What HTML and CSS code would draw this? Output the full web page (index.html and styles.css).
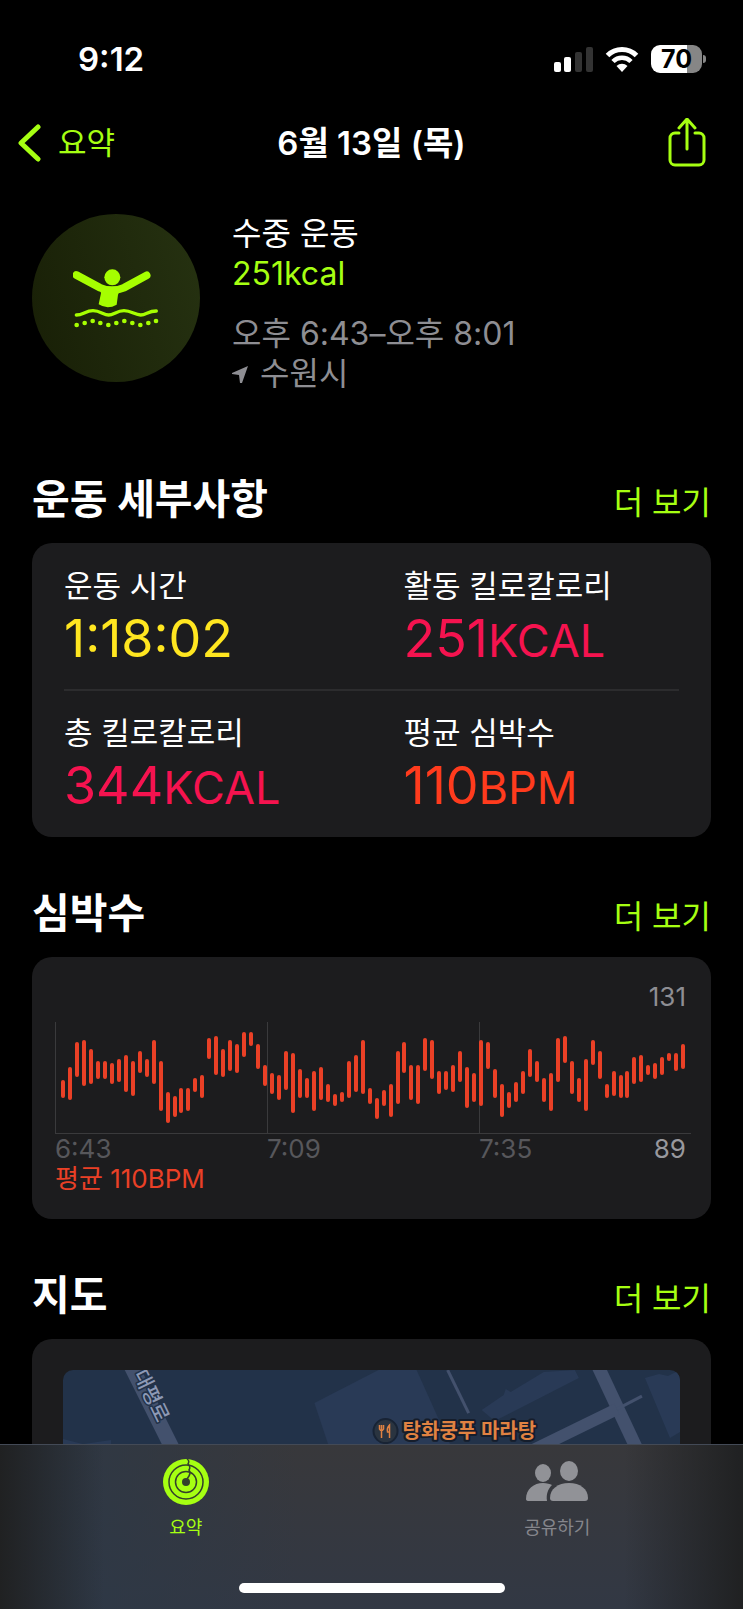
FILE: index.html
```html
<!DOCTYPE html>
<html lang="ko">
<head>
  <meta charset="UTF-8">
  <meta name="viewport" content="width=device-width, initial-scale=1.0">
  <title>수중 운동</title>
  <link rel="stylesheet" href="styles.css">
</head>
<body>

<div class="status-bar">
  <span class="time">9:12</span>
  <div class="status-icons">
    <svg width="39" height="26" viewBox="0 0 39 26">
      <rect x="0" y="16" width="7" height="10" rx="2" fill="#fff"/>
      <rect x="10" y="11" width="7" height="15" rx="2" fill="#fff"/>
      <rect x="21" y="6" width="7" height="20" rx="2" fill="#333"/>
      <rect x="32" y="1" width="7" height="25" rx="2" fill="#333"/>
    </svg>
    <svg width="34" height="26" viewBox="0 0 34 26">
      <path d="M2.5 9.5a20.5 20.5 0 0 1 29 0" fill="none" stroke="#fff" stroke-width="5"/>
      <path d="M8 15.5a12.700 12.700 0 0 1 18 0" fill="none" stroke="#fff" stroke-width="4.600"/>
      <path d="M17 26l-5.500-6a8 8 0 0 1 11 0z" fill="#fff"/>
    </svg>
    <div class="battery"><span>70</span></div>
  </div>
</div>

<nav class="nav-bar">
  <a class="back" href="#summary">
    <svg width="24" height="38" viewBox="0 0 24 38"><path d="M20 3L3 19l17 16" fill="none" stroke="#a6ff12" stroke-width="5" stroke-linecap="round" stroke-linejoin="round"/></svg>
    요약
  </a>
  <h1>6월 13일 (목)</h1>
  <button class="share" aria-label="공유">
    <svg width="38" height="50" viewBox="0 0 38 50" fill="none" stroke="#a6ff12" stroke-width="3" stroke-linecap="round" stroke-linejoin="round">
      <path d="M11 15H7a5 5 0 0 0-5 5v22a5 5 0 0 0 5 5h24a5 5 0 0 0 5-5V20a5 5 0 0 0-5-5h-4"/>
      <path d="M19 31V2M11 10l8-9 8 9"/>
    </svg>
  </button>
</nav>

<main>
  <div class="hero">
    <div class="badge">
      <svg width="87" height="60" viewBox="219 232 261 180" fill="#a6ff00">
        <circle cx="337" cy="260" r="24"/>
        <path d="M229 253L300 291Q336 306 372 291L440 254" fill="none" stroke="#a6ff00" stroke-width="23" stroke-linecap="round"/>
        <path d="M298 285Q336 300 366 285L354 312 350 342Q322 358 296 341L303 308z"/>
        <path d="M229 373C249 373 257 360 279 360S311 373 326 373 350 360 372 360 405 373 422 373 444 361 469 361" fill="none" stroke="#a6ff00" stroke-width="10" stroke-linecap="round"/>
        <circle cx="230" cy="403" r="7"/><circle cx="254" cy="397" r="7"/>
        <circle cx="278" cy="391" r="7"/><circle cx="301" cy="397" r="7"/>
        <circle cx="325" cy="403" r="7"/><circle cx="349" cy="397" r="7"/>
        <circle cx="373" cy="391" r="7"/><circle cx="397" cy="397" r="7"/>
        <circle cx="421" cy="403" r="7"/><circle cx="445" cy="397" r="7"/>
        <circle cx="468" cy="391" r="7"/>
      </svg>
    </div>
    <div class="info">
      <p>수중 운동</p>
      <p class="kcal">251kcal</p>
      <p class="when">오후 6:43–오후 8:01</p>
      <p class="place">
        <svg width="16" height="17" viewBox="0 0 16 17"><path d="M16 0L10 17H8L7 9 0 8V7z" fill="#8e8e93"/></svg>
        수원시
      </p>
    </div>
  </div>

  <section>
    <header>
      <h2>운동 세부사항</h2>
      <a href="#details">더 보기</a>
    </header>
    <div class="card stats">
      <div class="stat">
        <p>운동 시간</p>
        <strong class="yellow">1:18:02</strong>
      </div>
      <div class="stat">
        <p>활동 킬로칼로리</p>
        <strong class="pink">251<small>KCAL</small></strong>
      </div>
      <hr>
      <div class="stat">
        <p>총 킬로칼로리</p>
        <strong class="pink">344<small>KCAL</small></strong>
      </div>
      <div class="stat">
        <p>평균 심박수</p>
        <strong class="orange">110<small>BPM</small></strong>
      </div>
    </div>
  </section>

  <section>
    <header>
      <h2>심박수</h2>
      <a href="#heart">더 보기</a>
    </header>
    <div class="card heart">
      <div class="max">131</div>
      <div class="plot" id="plot"></div>
      <div class="axis">
        <span>6:43</span>
        <span>7:09</span>
        <div class="last">
          <span>7:35</span>
          <span class="min">89</span>
        </div>
      </div>
      <div class="average">평균 110BPM</div>
    </div>
  </section>

  <section>
    <header>
      <h2>지도</h2>
      <a href="#map">더 보기</a>
    </header>
    <div class="card map-card">
      <svg class="map" viewBox="0 0 616 400" preserveAspectRatio="xMidYMin slice">
        <rect width="616" height="400" fill="#223249"/>
        <g fill="#293a56">
          <path d="M251 33L315 0h38l36 80-119 10z"/>
          <path d="M418 40l22-15 2-6 5 3L480 2l31-2 4 8-84 43z"/>
          <path d="M581 8l14-4 9 2 12-6v62l-10 6z"/>
          <path d="M0 69l20 5 28-4v30H0z"/>
        </g>
        <g fill="none" stroke="#43516d">
          <path d="M68 -4L146 152" stroke-width="15"/>
          <path d="M384 0l21 43" stroke-width="3"/>
          <path d="M534 -4l46 98" stroke-width="13"/>
          <path d="M553 39l-94 46" stroke-width="12"/>
          <path d="M553 39l25-13" stroke-width="3"/>
        </g>
        <text class="street" transform="translate(70 4) rotate(64)">대평로</text>
        <circle cx="322" cy="61" r="12" fill="#2a3440" stroke="#182334" stroke-width="2"/>
        <path d="M318 55v13M316 55v4q2 3 4 0v-4M326 68V55q-3 3-2 7h2" fill="none" stroke="#e08242" stroke-width="1.500"/>
        <text class="poi" x="339" y="68">탕화쿵푸 마라탕</text>
      </svg>
    </div>
  </section>
</main>

<footer class="tab-bar">
  <div class="tabs">
    <a class="active" href="#summary">
      <svg width="48" height="48" viewBox="0 0 48 48">
        <circle cx="24" cy="24" r="23" fill="#a6ff12"/>
        <g fill="none" stroke="#33402c" stroke-width="1.500">
          <circle cx="24" cy="24" r="17"/>
          <circle cx="24" cy="24" r="10.500"/>
          <path d="M25 1q3 2 1 5 3 3 1 6 2 3 0 6l-2 3"/>
        </g>
        <circle cx="24" cy="24" r="4" fill="#33402c"/>
      </svg>
      요약
    </a>
    <a href="#sharing">
      <svg width="62" height="48" viewBox="0 0 62 48" fill="#919297">
        <ellipse cx="17" cy="15" rx="8" ry="9"/>
        <ellipse cx="43" cy="13" rx="9" ry="10"/>
        <path d="M0 41c0-10 8-16 17-16 4 0 7 1 9 2-4 4-6 9-5 16H3q-3 0-3-2z"/>
        <path d="M24 40c0-9 8-15 19-15s19 6 19 15q0 3-3 3H27q-3 0-3-3z"/>
      </svg>
      공유하기
    </a>
  </div>
  <div class="home-indicator"></div>
</footer>

<script>
  // [high, low] bpm, one pair per bar
  const beats = [
    [108, 101], [114, 100], [126, 111], [127, 107], [123, 108], [117, 110], [117, 110], [116, 108], [118, 109], [120, 104],
    [117, 102], [122, 113], [118, 111], [127, 108], [117, 95], [102, 89], [100, 92], [104, 94], [104, 95], [109, 104],
    [110, 101], [128, 120], [129, 112], [123, 111], [127, 114], [125, 113], [131, 121], [131, 126], [125, 115], [115, 107],
    [111, 103], [110, 100], [122, 105], [121, 94], [113, 101], [109, 101], [112, 95], [114, 100], [106, 99], [101, 97],
    [102, 99], [117, 101], [120, 104], [127, 103], [104, 98], [99, 91], [103, 97], [106, 92], [122, 98], [126, 113],
    [115, 100], [115, 98], [128, 114], [127, 110], [112, 103], [112, 105], [115, 104], [122, 109], [114, 96], [111, 99],
    [127, 97], [126, 115], [113, 101], [106, 92], [102, 96], [107, 99], [112, 103], [123, 111], [117, 109], [109, 99],
    [111, 95], [128, 109], [129, 118], [117, 103], [109, 99], [118, 95], [127, 117], [122, 110], [106, 101], [112, 102],
    [110, 101], [112, 101], [119, 108], [120, 109], [115, 112], [116, 110], [119, 112], [121, 119], [121, 114], [125, 115]
  ];

  const plot = document.getElementById('plot');
  const perBeat = 2.07;

  beats.forEach(([high, low]) => {
    const bar = document.createElement('i');
    bar.style.marginTop = 10 + (131 - high) * perBeat + 'px';
    bar.style.height = 4 + (high - low) * perBeat + 'px';
    plot.appendChild(bar);
  });
</script>

</body>
</html>
```
FILE: styles.css
```css
* {
  box-sizing: border-box;
}

body {
  display: flex;
  flex-direction: column;
  height: 100vh;
  margin: 0;
  overflow: hidden;
  background-color: #000;
  color: #fff;
  font-family: Inter, 'Noto Sans CJK KR', sans-serif;
  font-size: 31px;
  line-height: 40px;
}

h1, h2, p {
  margin: 0;
}

a {
  color: #a6ff12;
  text-decoration: none;
}

svg {
  display: block;
}

/* status bar */
.status-bar {
  display: flex;
  justify-content: space-between;
  align-items: center;
  height: 100px;
  padding: 18px 37px 0 78px;
}

.time {
  font-size: 33px;
  font-weight: 600;
}

.status-icons {
  display: flex;
  align-items: center;
  gap: 12px;
}

.battery {
  position: relative;
  width: 51px;
  height: 28px;
  margin-right: 4px;
  border-radius: 9px;
  background: linear-gradient(90deg, #fff 70%, #868686 70%);
  color: #000;
  font-size: 25px;
  font-weight: 700;
  line-height: 28px;
  text-align: center;
}

.battery::after {
  content: "";
  position: absolute;
  top: 10px;
  right: -4px;
  width: 3px;
  height: 8px;
  border-radius: 0 3px 3px 0;
  background-color: #868686;
}

/* navigation */
.nav-bar {
  display: grid;
  grid-template-columns: 1fr auto 1fr;
  align-items: center;
  height: 86px;
  padding: 0 37px 0 18px;
}

.back {
  display: flex;
  align-items: center;
  gap: 16px;
}

.nav-bar h1 {
  padding-left: 19px;
  font-size: 33px;
  font-weight: 600;
}

.share {
  justify-self: end;
  padding: 0;
  border: none;
  background: none;
  cursor: pointer;
}

main {
  flex: 1;
  min-height: 0;
  padding: 28px 32px 0;
  overflow: hidden;
}

/* workout summary */
.hero {
  display: flex;
  gap: 32px;
  margin-bottom: 73px;
  font-size: 32px;
}

.badge {
  display: flex;
  justify-content: center;
  align-items: center;
  width: 168px;
  height: 168px;
  border-radius: 50%;
  background: linear-gradient(75deg, #181f06, #263211);
}

.kcal {
  color: #a6ff12;
}

.when, .place {
  color: #8e8e93;
}

.when {
  margin-top: 20px;
}

.place {
  display: flex;
  align-items: center;
  gap: 12px;
}

/* sections */
section {
  margin-bottom: 44px;
}

section header {
  display: flex;
  justify-content: space-between;
  align-items: baseline;
  height: 76px;
  font-size: 32px;
  line-height: 64px;
}

h2 {
  font-size: 41px;
  font-weight: 700;
}

.card {
  border-radius: 20px;
  background-color: #1c1c1e;
}

.stats {
  display: grid;
  grid-template-columns: 1fr 1fr;
}

.stats hr {
  grid-column: 1 / -1;
  width: calc(100% - 64px);
  height: 2px;
  margin: -1px auto;
  border: none;
  background-color: #2c2c2e;
}

.stat {
  height: 147px;
  padding: 23px 0 0 32px;
}

.stat strong {
  display: block;
  font-size: 52px;
  font-weight: 400;
  line-height: 66px;
}

.stat small {
  font-size: 45px;
}

.yellow {
  color: #ffe620;
}

.pink {
  color: #f5134f;
}

.orange {
  color: #ff3b1d;
}

/* heart rate chart */
.heart {
  padding: 23px 20px 25px 23px;
  font-size: 26px;
  line-height: 30px;
}

.max {
  padding-right: 5px;
  margin-bottom: 8px;
  color: #8e8e93;
  line-height: 34px;
  text-align: right;
}

.plot {
  display: flex;
  justify-content: space-between;
  align-items: flex-start;
  height: 112px;
  padding: 0 5px 0 6px;
  border-bottom: 1px solid #3a3a3c;
  background: repeating-linear-gradient(90deg, #3a3a3c 0 1px, transparent 1px 33.333%);
}

.plot i {
  width: 4px;
  border-radius: 2px;
  background-color: #ea4026;
}

.axis {
  display: grid;
  grid-template-columns: 1fr 1fr 1fr;
  color: #57575b;
}

.axis .last {
  display: flex;
  justify-content: space-between;
  padding-right: 5px;
}

.axis .min {
  color: #98989d;
}

.average {
  color: #ea4026;
}

/* map */
.map-card {
  padding: 31px;
}

.map {
  width: 100%;
  height: 400px;
  border-radius: 10px;
}

.street, .poi {
  paint-order: stroke;
  stroke-linejoin: round;
  font-size: 20px;
}

.street {
  fill: #8d99b5;
  stroke: #223249;
  stroke-width: 3px;
  font-weight: 500;
}

.poi {
  fill: #e08242;
  stroke: #151d2b;
  stroke-width: 4px;
  font-weight: 700;
}

/* tab bar */
.tab-bar {
  display: flex;
  flex-direction: column;
  justify-content: space-between;
  align-items: center;
  height: 165px;
  padding: 13px 0 16px;
  border-top: 1px solid #434a56;
  background:
    linear-gradient(90deg, #202122, rgba(32, 33, 34, 0) 14%, rgba(32, 33, 34, 0) 84%, #202122),
    linear-gradient(90deg, rgba(45, 56, 70, 0.8) 10%, rgba(56, 56, 60, 0) 40%),
    linear-gradient(#38383b, #323844);
}

.tabs {
  display: grid;
  grid-template-columns: 1fr 1fr;
  width: 100%;
}

.tabs a {
  display: flex;
  flex-direction: column;
  align-items: center;
  gap: 8px;
  color: #85868c;
  font-size: 18px;
  line-height: 28px;
}

.tabs .active {
  color: #a6ff12;
}

.home-indicator {
  width: 266px;
  height: 10px;
  border-radius: 5px;
  background-color: #fff;
}
```
